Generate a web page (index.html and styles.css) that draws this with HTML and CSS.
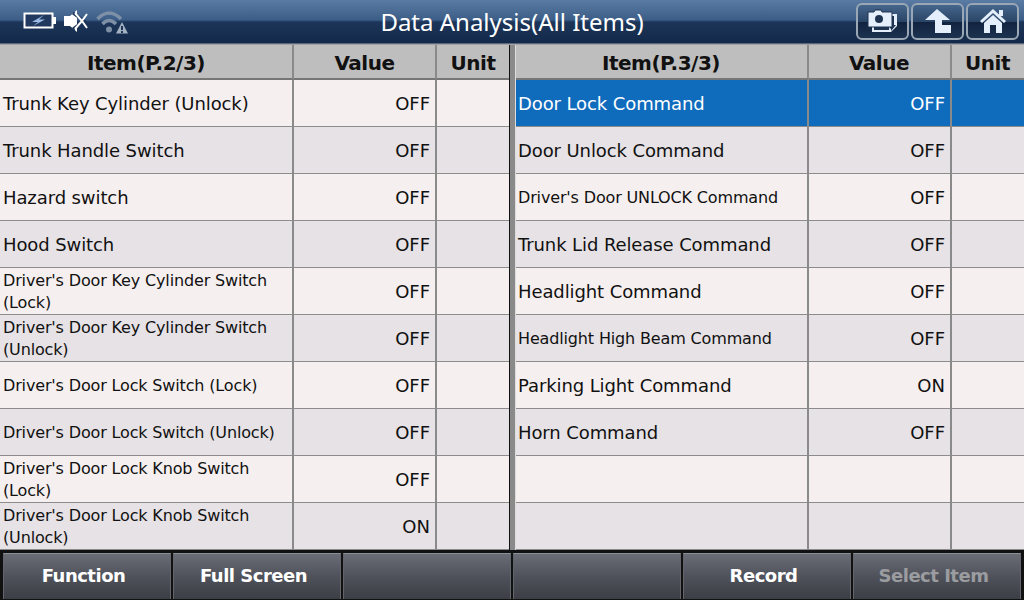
FILE: index.html
```html
<!DOCTYPE html>
<html lang="en">

<head>
    <meta charset="UTF-8">
    <title>Data Analysis</title>
    <link rel="stylesheet" href="styles.css">
</head>

<body>
    <div class="topo">
        <div class="status">
            <svg width="34" height="17" viewBox="0 0 34 17">
                <rect x="0.500" y="0.500" width="30" height="16" fill="#fff"/>
                <rect x="2.500" y="2.500" width="26" height="12" fill="#22395f"/>
                <rect x="30" y="5" width="3" height="7" fill="#fff"/>
                <path d="M21 3 L9 10 L15 10 L10 14 L22 7.500 L16 7.500 Z" fill="#9dbce6"/>
            </svg>
            <svg width="24" height="24" viewBox="0 0 24 24">
                <path d="M0 7 H6 L13 1 V23 L6 17 H0 Z" fill="#fff"/>
                <path d="M9 4 L20 12 L9 20" stroke="#1c3558" stroke-width="3" fill="none"/>
                <path d="M11 4 L18 12 L11 20 M23 5 L18 12 L23 19" stroke="#fff" stroke-width="2" fill="none"/>
            </svg>
            <svg class="wifi" width="32" height="24" viewBox="0 0 32 24">
                <path d="M1.500 9 Q13 -3 25 9" stroke="#7d90a6" stroke-width="3.500" fill="none"/>
                <path d="M6.500 14 Q13 7 20 14" stroke="#7d90a6" stroke-width="3.500" fill="none"/>
                <circle cx="13" cy="19.500" r="3" fill="#7d90a6"/>
                <path d="M26 12 L32 23.500 H20 Z" fill="#a3b1c0"/>
                <rect x="25" y="16" width="2" height="4" fill="#1c3558"/>
                <rect x="25" y="21" width="2" height="2" fill="#1c3558"/>
            </svg>
        </div>
        <h1 class="titulo">Data Analysis(All Items)</h1>
        <div class="atalhos">
            <button class="atalho">
                <svg width="31" height="24" viewBox="0 0 31 24">
                    <path d="M5 5 H30 V17 L24 23 H5 Z" fill="#e4effb"/>
                    <path d="M7 17 H22 V21 H7 Z" fill="#1d3350"/>
                    <path d="M27 7 V16 L23 20 L22 14 V7 Z" fill="#1d3350"/>
                    <path d="M29 16 L24 22 V16 Z" fill="#1d3350"/>
                    <path d="M1 3 H7 L8 1 H14 L15 3 H25 V18 H1 Z" fill="#e4effb" stroke="#1d3350"/>
                    <circle cx="12" cy="10" r="4" fill="#1d3350"/>
                </svg>
            </button>
            <button class="atalho">
                <svg width="26" height="24" viewBox="0 0 26 24">
                    <path d="M12 0 L25 11 H17 V16 H26 V24 H10 V11 H0 Z" fill="#e4effb"/>
                </svg>
            </button>
            <button class="atalho">
                <svg width="26" height="24" viewBox="0 0 26 24">
                    <path d="M13 0 L26 12 L24 14 L13 4 L2 14 L0 12 Z" fill="#e4effb"/>
                    <rect x="19" y="1" width="4" height="6" fill="#e4effb"/>
                    <path d="M4 14 L13 6 L22 14 V24 H16 V16 H10 V24 H4 Z" fill="#e4effb"/>
                </svg>
            </button>
        </div>
    </div>

    <div class="paineis">
        <div class="grade esq">
            <div class="cab">Item(P.2/3)</div><div class="cab">Value</div><div class="cab">Unit</div>

            <div class="cel">Trunk Key Cylinder (Unlock)</div><div class="cel val">OFF</div><div class="cel"></div>
            <div class="cel par">Trunk Handle Switch</div><div class="cel par val">OFF</div><div class="cel par"></div>
            <div class="cel">Hazard switch</div><div class="cel val">OFF</div><div class="cel"></div>
            <div class="cel par">Hood Switch</div><div class="cel par val">OFF</div><div class="cel par"></div>
            <div class="cel peq">Driver's Door Key Cylinder Switch (Lock)</div><div class="cel val">OFF</div><div class="cel"></div>
            <div class="cel par peq">Driver's Door Key Cylinder Switch (Unlock)</div><div class="cel par val">OFF</div><div class="cel par"></div>
            <div class="cel peq">Driver's Door Lock Switch (Lock)</div><div class="cel val">OFF</div><div class="cel"></div>
            <div class="cel par peq">Driver's Door Lock Switch (Unlock)</div><div class="cel par val">OFF</div><div class="cel par"></div>
            <div class="cel peq">Driver's Door Lock Knob Switch (Lock)</div><div class="cel val">OFF</div><div class="cel"></div>
            <div class="cel par peq">Driver's Door Lock Knob Switch (Unlock)</div><div class="cel par val">ON</div><div class="cel par"></div>
        </div>
        <div class="grade dir">
            <div class="cab">Item(P.3/3)</div><div class="cab">Value</div><div class="cab">Unit</div>

            <div class="cel sel">Door Lock Command</div><div class="cel sel val">OFF</div><div class="cel sel"></div>
            <div class="cel par">Door Unlock Command</div><div class="cel par val">OFF</div><div class="cel par"></div>
            <div class="cel peq">Driver's Door UNLOCK Command</div><div class="cel val">OFF</div><div class="cel"></div>
            <div class="cel par">Trunk Lid Release Command</div><div class="cel par val">OFF</div><div class="cel par"></div>
            <div class="cel">Headlight Command</div><div class="cel val">OFF</div><div class="cel"></div>
            <div class="cel par peq">Headlight High Beam Command</div><div class="cel par val">OFF</div><div class="cel par"></div>
            <div class="cel">Parking Light Command</div><div class="cel val">ON</div><div class="cel"></div>
            <div class="cel par">Horn Command</div><div class="cel par val">OFF</div><div class="cel par"></div>
            <div class="cel"></div><div class="cel val"></div><div class="cel"></div>
            <div class="cel par"></div><div class="cel par val"></div><div class="cel par"></div>
        </div>
    </div>

    <div class="rodape">
        <button class="btn">Function</button>
        <button class="btn">Full Screen</button>
        <button class="btn"></button>
        <button class="btn"></button>
        <button class="btn">Record</button>
        <button class="btn inativo">Select Item</button>
    </div>
</body>

</html>
```

FILE: styles.css
```css
* {
    margin: 0;
    padding: 0;
    box-sizing: border-box;
}

body {
    width: 1024px;
    height: 600px;
    overflow: hidden;
    display: flex;
    flex-direction: column;
    background: #1c1c1e;
    font-family: "DejaVu Sans", Verdana, sans-serif;
}

.topo {
    position: relative;
    height: 45px;
    flex: none;
    display: flex;
    align-items: center;
    justify-content: space-between;
    background: linear-gradient(#5a7ba3 0, #3b5d87 20px, #1c3558 22px, #14294a 43px, #a0a4a8 44px);
    color: #fff;
}

.status {
    display: flex;
    align-items: center;
    gap: 7px;
    padding-left: 23px;
    padding-bottom: 4px;
}

.wifi {
    margin-left: 1px;
    margin-top: 2px;
}

.titulo {
    position: absolute;
    left: 0;
    right: 0;
    top: 5px;
    text-align: center;
    font-family: "Noto Sans", sans-serif;
    font-size: 24px;
    line-height: 34px;
    font-weight: normal;
}

.atalhos {
    display: flex;
    gap: 2px;
    padding: 0 5px 3px 0;
}

.atalho {
    width: 53px;
    height: 37px;
    display: flex;
    align-items: center;
    justify-content: center;
    border: 2px solid #9aa7b5;
    border-radius: 6px;
    background: linear-gradient(#46668c, #2a4567 50%, #12233f 52%, #1c3350);
}

.paineis {
    height: 505px;
    flex: none;
    display: flex;
    gap: 5px;
    background: #8a8a8a;
}

.grade {
    display: grid;
    grid-template-rows: 35px repeat(10, 47px);
    height: 505px;
}

.esq {
    width: 510px;
    grid-template-columns: 294px 143px 1fr;
    border-right: 1px solid #111;
}

.dir {
    width: 509px;
    grid-template-columns: 293px 143px 1fr;
    border-left: 1px solid #ddd;
}

.cab {
    display: flex;
    align-items: center;
    justify-content: center;
    padding-top: 2px;
    background: #bebebe;
    border-right: 2px solid #8a8a8a;
    border-bottom: 2px solid #777;
    font-size: 20px;
    font-weight: bold;
    color: #111;
    letter-spacing: -0.5px;
}

.cel {
    display: flex;
    align-items: center;
    padding: 2px 3px 0;
    background: #f6efef;
    border-right: 2px solid #8a8a8a;
    border-bottom: 1px solid #8c8c8c;
    font-size: 18px;
    line-height: 22px;
    color: #111;
    letter-spacing: -0.1px;
}

.cab:nth-child(3n),
.cel:nth-child(3n) {
    border-right: none;
}

.dir .cel {
    padding-left: 2px;
}

.dir .cab {
    padding-right: 1px;
}

.par {
    background: #e6e2e5;
}

.peq {
    font-size: 16px;
    letter-spacing: -0.15px;
}

.val {
    justify-content: flex-end;
    padding-right: 5px;
    letter-spacing: 0;
}

.sel {
    background: #0f6cbd;
    color: #fff;
}

.rodape {
    height: 50px;
    flex: none;
    display: grid;
    grid-template-columns: repeat(6, 168px);
    gap: 2px;
    padding: 3px 3px 1px;
    background: #111;
}

.btn {
    border: 1px solid #62656c;
    border-top-color: #8a8e96;
    border-bottom: none;
    padding: 0 7px 2px 0;
    background: linear-gradient(#6a6d75, #4f525a 50%, #3b3e45);
    color: #fff;
    font-family: "DejaVu Sans", Verdana, sans-serif;
    font-size: 18px;
    font-weight: bold;
    letter-spacing: -0.5px;
}

.inativo {
    color: #9b9ca0;
}
```
